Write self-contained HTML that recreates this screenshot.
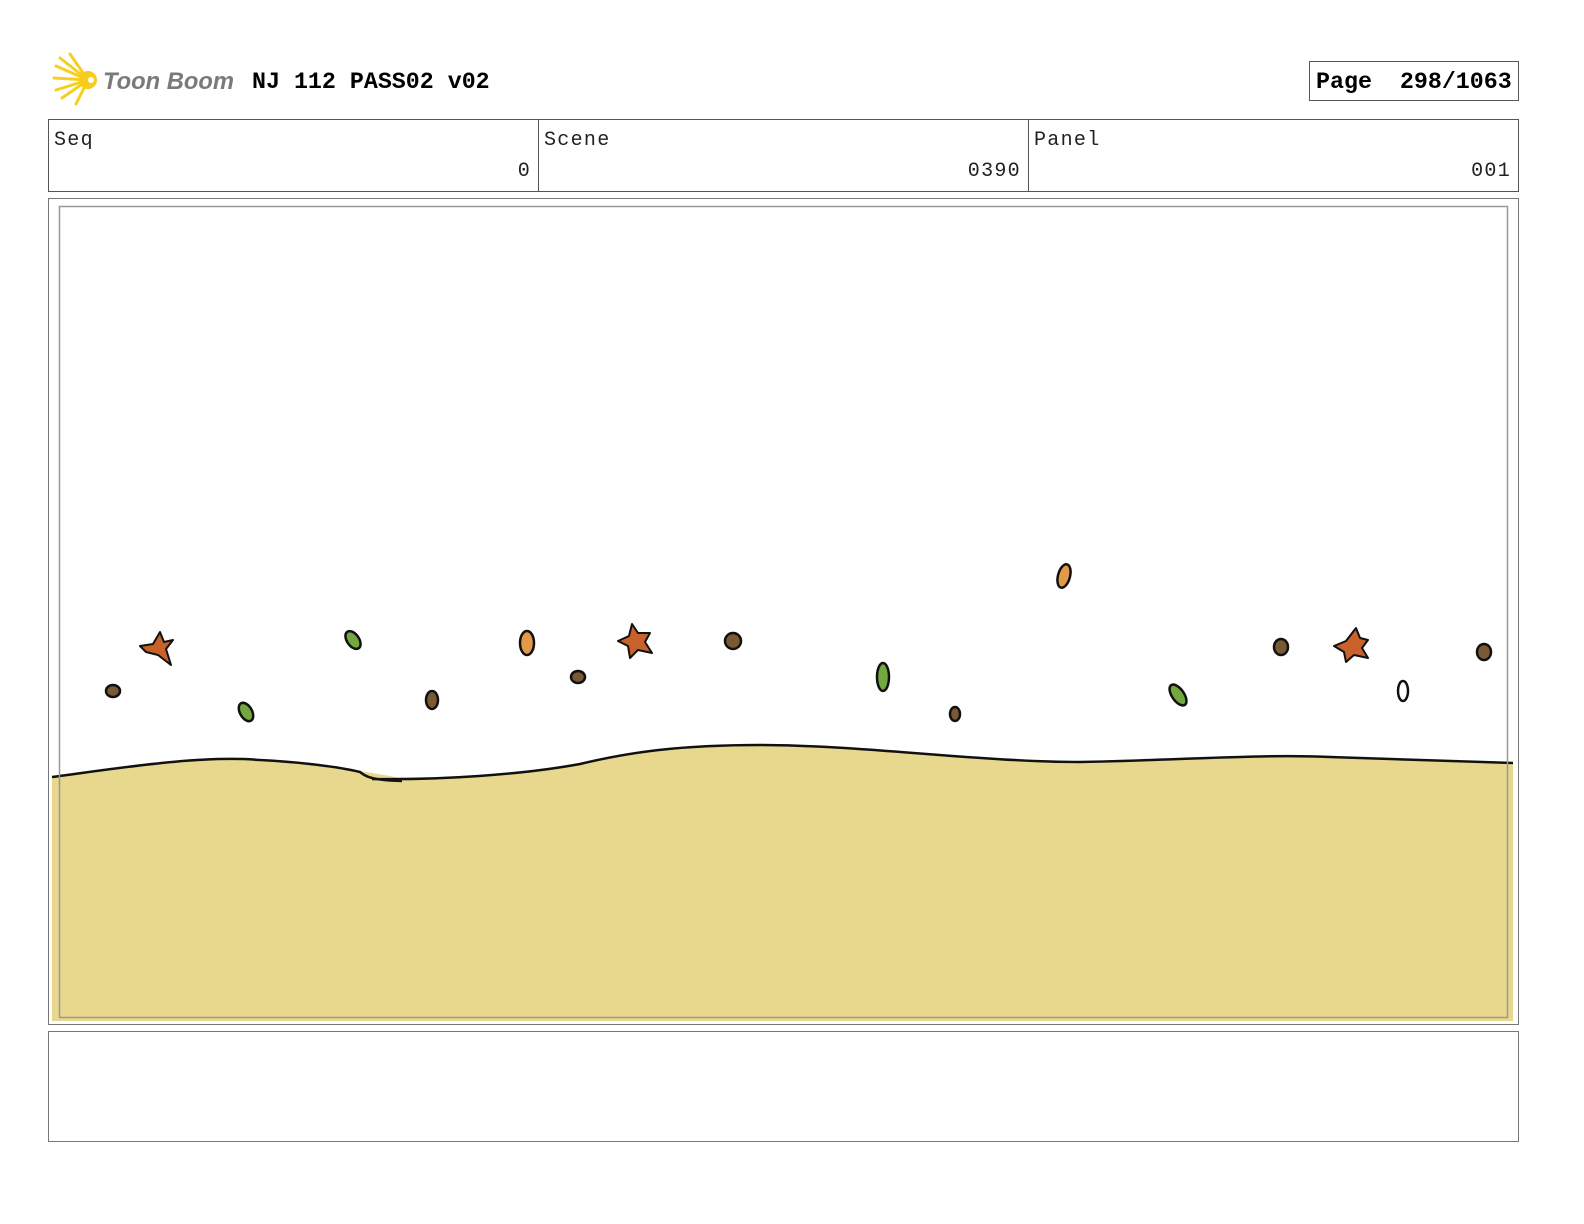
<!DOCTYPE html>
<html><head><meta charset="utf-8"><style>
html,body{margin:0;padding:0;background:#fff;width:1584px;height:1224px;overflow:hidden}
svg{display:block}
</style></head><body>
<svg width="1584" height="1224" viewBox="0 0 1584 1224" xmlns="http://www.w3.org/2000/svg">
<!-- logo -->
<g stroke="#f5d020" stroke-width="3" stroke-linecap="round" fill="none">
<path d="M88 80 L56 66"/><path d="M88 80 L60 58"/><path d="M88 80 L70 54"/><path d="M88 80 L54 78"/><path d="M88 80 L56 90"/><path d="M88 80 L62 98"/><path d="M88 80 L76 104"/>
</g>
<circle cx="88" cy="80" r="9" fill="#f7cc1a"/>
<circle cx="91" cy="80" r="3" fill="#fff"/>
<text x="103" y="89" font-family="Liberation Sans, sans-serif" font-style="italic" font-weight="bold" font-size="24" fill="#7a7a7a" textLength="131" lengthAdjust="spacingAndGlyphs">Toon Boom</text>
<text x="252" y="88" font-family="Liberation Mono, monospace" font-weight="bold" font-size="23.3" fill="#000">NJ 112 PASS02 v02</text>
<rect x="1309.5" y="61.5" width="209" height="39" fill="none" stroke="#555" stroke-width="1"/>
<text x="1316" y="88" font-family="Liberation Mono, monospace" font-weight="bold" font-size="23.3" fill="#000">Page&#160;&#160;298/1063</text>
<!-- header table -->
<rect x="48.5" y="119.5" width="1470" height="72" fill="none" stroke="#555"/>
<line x1="538.5" y1="119" x2="538.5" y2="191" stroke="#555"/>
<line x1="1028.5" y1="119" x2="1028.5" y2="191" stroke="#555"/>
<g font-family="Liberation Mono, monospace" font-size="20" letter-spacing="1.3" fill="#222">
<text x="54" y="145">Seq</text><text x="531" y="176" text-anchor="end">0</text>
<text x="544" y="145">Scene</text><text x="1021" y="176" text-anchor="end">0390</text>
<text x="1034" y="145">Panel</text><text x="1511" y="176" text-anchor="end">001</text>
</g>
<!-- panel -->
<rect x="48.5" y="198.5" width="1470" height="826" fill="none" stroke="#777"/>
<path d="M52 777 C120 768 200 755 260 760 C310 763 360 770 400 778 C460 778 520 775 580 764 C630 752 680 745 760 745 C860 745 980 762 1080 762 C1180 760 1260 754 1330 757 C1420 760 1480 762 1513 763 L1513 1021 L52 1021 Z" fill="#e7d88d"/>
<path d="M52 777 C120 768 200 755 260 760 C300 762 340 767 360 772 C366 777 372 780 402 781 M372 779 C440 780 520 775 580 764 C630 752 680 745 760 745 C860 745 980 762 1080 762 C1180 760 1260 754 1330 757 C1420 760 1480 762 1513 763" fill="none" stroke="#111" stroke-width="2.5"/>
<rect x="59.5" y="206.5" width="1448" height="811" fill="none" stroke="#999" stroke-width="1.5"/>
<!-- stars -->
<g stroke="#111" stroke-width="2" fill="#c8612a" stroke-linejoin="round">
<path d="M160 632 L164 642 L173 640 L166 649 L171 665 L158 655 L146 652 L140 646 L153 644 Z"/>
<path d="M632 624 L638 633 L650 633 L645 642 L652 653 L638 650 L630 658 L628 646 L618 641 L629 636 Z"/>
<path d="M1356 628 L1360 638 L1368 640 L1362 648 L1368 658 L1354 655 L1346 662 L1344 652 L1334 646 L1346 641 Z"/>
</g>
<!-- leaves / seeds -->
<g stroke="#111" stroke-width="2.5">
<ellipse cx="353" cy="640" rx="6" ry="10" transform="rotate(-35 353 640)" fill="#72a83e"/>
<ellipse cx="246" cy="712" rx="6" ry="10" transform="rotate(-30 246 712)" fill="#72a83e"/>
<ellipse cx="883" cy="677" rx="6" ry="14" fill="#72a83e"/>
<ellipse cx="1178" cy="695" rx="6" ry="12" transform="rotate(-35 1178 695)" fill="#72a83e"/>
<ellipse cx="527" cy="643" rx="7" ry="12" fill="#e09a48"/>
<ellipse cx="1064" cy="576" rx="6" ry="12" transform="rotate(15 1064 576)" fill="#e09a48"/>
<ellipse cx="1403" cy="691" rx="5" ry="10" fill="#fff"/>
<ellipse cx="113" cy="691" rx="7" ry="6" fill="#7a5a34"/>
<ellipse cx="432" cy="700" rx="6" ry="9" fill="#7a5a34"/>
<ellipse cx="578" cy="677" rx="7" ry="6" fill="#7a5a34"/>
<ellipse cx="733" cy="641" rx="8" ry="8" fill="#7a5a34"/>
<ellipse cx="955" cy="714" rx="5" ry="7" fill="#7a5a34"/>
<ellipse cx="1281" cy="647" rx="7" ry="8" fill="#7a5a34"/>
<ellipse cx="1484" cy="652" rx="7" ry="8" fill="#7a5a34"/>
</g>
<!-- caption -->
<rect x="48.5" y="1031.5" width="1470" height="110" fill="none" stroke="#777"/>
</svg>
</body></html>
